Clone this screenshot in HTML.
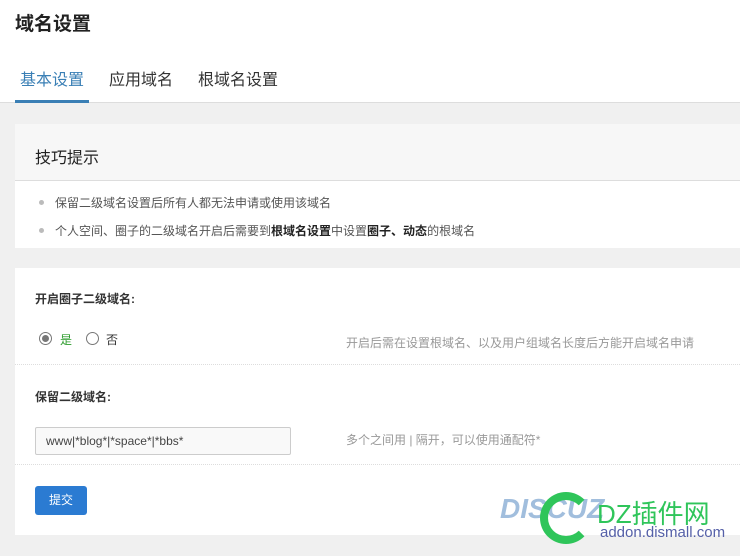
<!DOCTYPE html>
<html><head><meta charset="utf-8"><style>
*{margin:0;padding:0;box-sizing:border-box}
body{width:740px;height:556px;overflow:hidden;background:#f0f0f0;font-family:"Liberation Sans","Noto Sans CJK SC",sans-serif;color:#333;position:relative}
.top{position:absolute;left:0;top:0;width:740px;height:103px;background:#fff;border-bottom:1px solid #ddd}
h1{position:absolute;left:15px;top:9px;font-size:19px;font-weight:bold;color:#222}
.tab{position:absolute;top:66px;font-size:16px;color:#333}
.tab.on{color:#3a7fb5}
.ul{position:absolute;left:15px;top:100px;width:74px;height:3px;background:#3a7fb5}
.c1{position:absolute;left:15px;top:124px;width:725px;height:124px;background:#fff}
.c1h{height:57px;background:#f7f7f7;border-bottom:1px solid #ddd;font-size:16px;padding:20px 0 0 20px;color:#222}
.li{position:absolute;left:39px;font-size:12px;color:#555}
.li:before{content:"";position:absolute;left:0;top:6px;width:5px;height:5px;border-radius:50%;background:#bbb}
.li span{margin-left:16px}
.c2{position:absolute;left:15px;top:268px;width:725px;height:267px;background:#fff}
.lab{position:absolute;left:20px;font-size:12px;font-weight:bold;color:#333}
.tip{position:absolute;left:331px;font-size:12px;color:#999}
.sep{position:absolute;left:0;width:725px;border-top:1px dotted #ddd}
.rad{position:absolute;width:13px;height:13px;border:1px solid #777;border-radius:50%;top:332px}
.inp{position:absolute;left:35px;top:427px;width:256px;height:28px;border:1px solid #ccc;border-radius:2px;background:#f9f9f9;font-size:12px;padding:6px 0 0 10px;color:#444}
.btn{position:absolute;left:35px;top:486px;width:52px;height:29px;background:#2b7bd2;border-radius:3px;color:#fff;font-size:12px;text-align:center;line-height:29px}
</style></head><body>
<div class="top">
<h1>域名设置</h1>
<div class="tab on" style="left:20px">基本设置</div>
<div class="tab" style="left:109px">应用域名</div>
<div class="tab" style="left:198px">根域名设置</div>
<div class="ul"></div>
</div>
<div class="c1"><div class="c1h">技巧提示</div></div>
<div class="li" style="top:194px"><span>保留二级域名设置后所有人都无法申请或使用该域名</span></div>
<div class="li" style="top:222px"><span>个人空间、圈子的二级域名开启后需要到<b style="color:#222">根域名设置</b>中设置<b style="color:#222">圈子、动态</b>的根域名</span></div>
<div class="c2">
<div class="lab" style="top:22px">开启圈子二级域名:</div>
<div class="tip" style="top:66px">开启后需在设置根域名、以及用户组域名长度后方能开启域名申请</div>
<div class="sep" style="top:96px"></div>
<div class="lab" style="top:120px">保留二级域名:</div>
<div class="tip" style="top:163px">多个之间用 | 隔开，可以使用通配符*</div>
<div class="sep" style="top:196px"></div>
</div>
<div class="rad" style="left:39px"><div style="width:7px;height:7px;border-radius:50%;background:#777;margin:2px"></div></div>
<div style="position:absolute;left:60px;top:331px;font-size:12px;color:#2a9a2a">是</div>
<div class="rad" style="left:86px"></div>
<div style="position:absolute;left:106px;top:331px;font-size:12px;color:#333">否</div>
<div class="inp">www|*blog*|*space*|*bbs*</div>
<div class="btn">提交</div>
<div style="position:absolute;left:500px;top:493px;font-size:28px;font-weight:bold;font-style:italic;color:#7aa3cf;opacity:.7">DISCUZ</div>
<div style="position:absolute;left:597px;top:494px;font-size:26px;color:#2fc55a">DZ插件网</div>
<div style="position:absolute;left:600px;top:524px;font-size:15px;color:#5560a8">addon.dismall.com</div>
<div style="position:absolute;left:540px;top:492px;width:52px;height:52px;border:8px solid #2fc55a;border-right-color:transparent;border-radius:50%"></div>
</body></html>
